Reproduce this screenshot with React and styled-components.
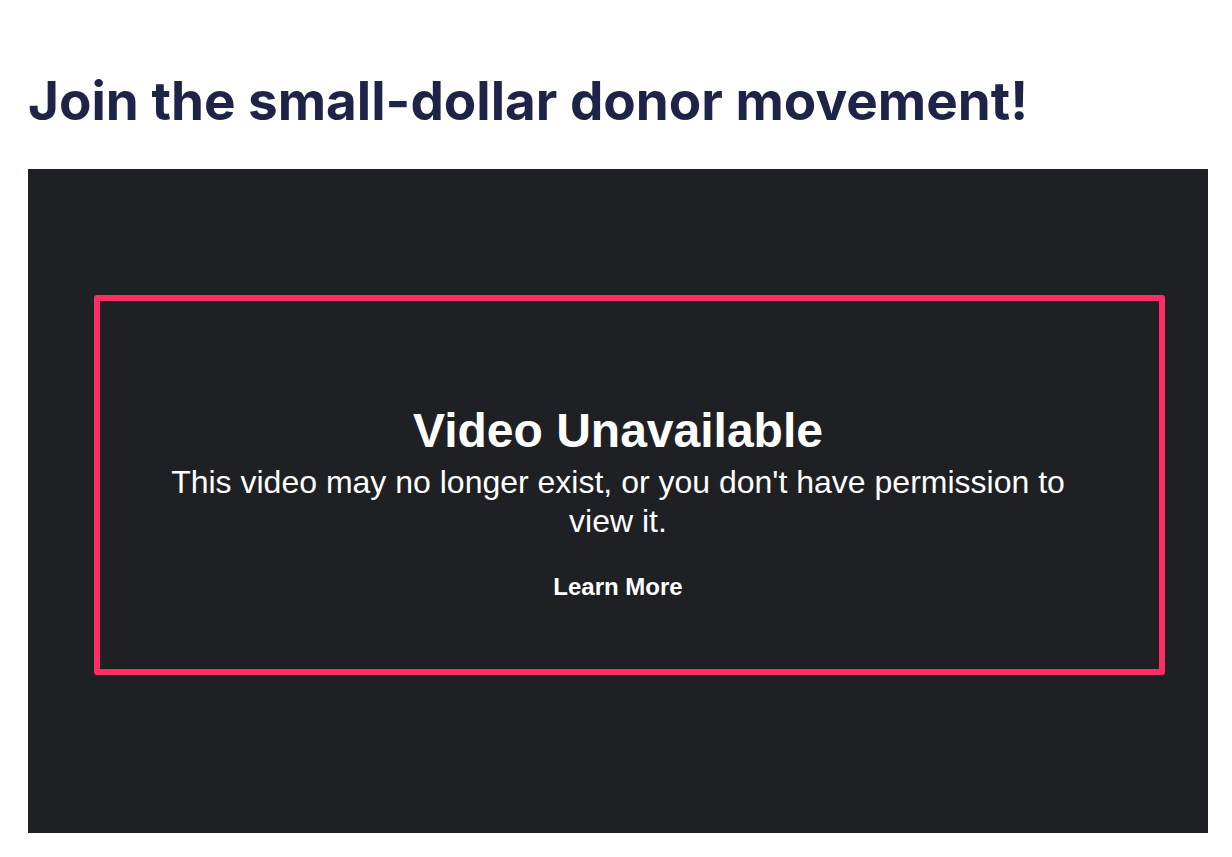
import React from "react";
import styled, { createGlobalStyle } from "styled-components";

const GlobalStyle = createGlobalStyle`
  * {
    box-sizing: border-box;
  }

  body {
    margin: 0;
    background: #fff;
    font-family: Inter, "Noto Sans", sans-serif;
  }
`;

const Page = styled.main`
  padding: 65px 24px 24px 28px;
`;

const Title = styled.h1`
  margin: 0 0 32px;
  font-family: Inter, sans-serif;
  font-size: 53px;
  font-weight: 700;
  line-height: 72px;
  color: #1d2447;
`;

const Player = styled.section`
  position: relative;
  width: 1180px;
  height: 664px;
  background: #1f2024;
  color: #fff;
  display: flex;
  align-items: center;
  justify-content: center;
  font-family: "Liberation Sans", Arial, sans-serif;
`;

const Message = styled.div`
  width: 930px;
  padding-top: 4px;
  display: flex;
  flex-direction: column;
  align-items: center;
  text-align: center;
`;

const Heading = styled.h2`
  margin: 0;
  font-size: 48px;
  font-weight: 700;
  line-height: 1.1;
`;

const Subtitle = styled.p`
  margin: 5px 0 0;
  font-size: 32px;
  line-height: 39px;
`;

const LearnMore = styled.a`
  margin-top: 32px;
  font-size: 24px;
  font-weight: 700;
  color: #fff;
  text-decoration: none;
`;

const Highlight = styled.div`
  position: absolute;
  left: 66px;
  top: 126px;
  width: 1071px;
  height: 380px;
  border: 6px solid #fd2d68;
  border-radius: 3px;
  pointer-events: none;
`;

const App = () => {
  return (
    <>
      <GlobalStyle />
      <Page>
        <Title>Join the small-dollar donor movement!</Title>
        <Player>
          <Message>
            <Heading>Video Unavailable</Heading>
            <Subtitle>
              This video may no longer exist, or you don't have permission to
              view it.
            </Subtitle>
            <LearnMore href="#">Learn More</LearnMore>
          </Message>
          <Highlight />
        </Player>
      </Page>
    </>
  );
};

export default App;
